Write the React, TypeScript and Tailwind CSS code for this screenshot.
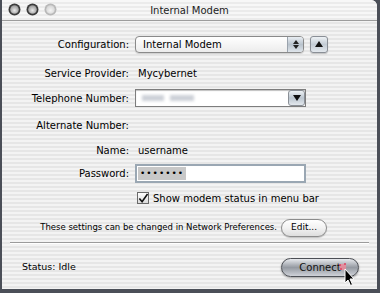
import React from "react";

const stripe =
  "bg-[repeating-linear-gradient(180deg,#f3f3f3_0px,#f3f3f3_2px,#e6e6e6_2px,#e6e6e6_4px)]";

function Light({ dark }: { dark: boolean }) {
  return (
    <svg width="13" height="13" viewBox="0 0 13 13">
      <defs>
        <radialGradient id={dark ? "ld" : "ll"} cx="50%" cy="60%" r="55%">
          <stop offset="0%" stopColor={dark ? "#e8e8e8" : "#f4f4f4"} />
          <stop offset="100%" stopColor={dark ? "#9a9a9a" : "#d6d6d6"} />
        </radialGradient>
      </defs>
      <circle cx="6.5" cy="6.5" r="6" fill={dark ? "#3a3a3a" : "#b8b8b8"} />
      <circle cx="6.5" cy="6.5" r="4.3" fill={`url(#${dark ? "ld" : "ll"})`} />
    </svg>
  );
}

function Label({ children }: { children: React.ReactNode }) {
  return (
    <div className="w-[128px] shrink-0 text-right pr-[1px] text-[10px] text-black">
      {children}
    </div>
  );
}

export default function App() {
  return (
    <div
      className="w-[380px] h-[293px] bg-[#4b4f58] overflow-hidden relative"
      style={{ fontFamily: '"DejaVu Sans", "Liberation Sans", sans-serif' }}
    >
      <div className={`ml-[2px] w-[375px] h-[289px] rounded-tr-[6px] ${stripe} flex flex-col`}>
        {/* Title bar */}
        <div className="h-[21px] shrink-0 relative flex items-center border-b border-[#9c9c9c] bg-[repeating-linear-gradient(180deg,#f7f7f7_0px,#f7f7f7_2px,#ebebeb_2px,#ebebeb_4px)] rounded-tr-[6px]">
          <div className="absolute left-[6px] top-[3px] flex gap-[5px]">
            <Light dark />
            <Light dark />
            <Light dark={false} />
          </div>
          <div className="w-full text-center text-[10px] text-[#222] leading-none pt-[1px]">
            Internal Modem
          </div>
        </div>

        {/* Row 1 */}
        <div className="mt-[14px] h-[18px] flex items-center">
          <Label>Configuration:</Label>
          <div className="ml-[5px] w-[169px] h-[17px] rounded-[4px] border border-[#8a8a8a] bg-gradient-to-b from-white to-[#ececec] flex items-center shadow-[0_1px_1px_rgba(0,0,0,0.15)]">
            <span className="pl-[7px] text-[10px] flex-1">Internal Modem</span>
            <div className="w-[16px] h-full border-l border-[#9aa3ad] rounded-r-[3px] bg-gradient-to-b from-[#e9eef3] via-[#b9c3cd] to-[#dfe5eb] flex flex-col items-center justify-center gap-[1px]">
              <svg width="6" height="4" viewBox="0 0 6 4"><path d="M0 4 L3 0 L6 4 Z" fill="#222" /></svg>
              <svg width="6" height="4" viewBox="0 0 6 4"><path d="M0 0 L3 4 L6 0 Z" fill="#222" /></svg>
            </div>
          </div>
          <div className="ml-[6px] w-[18px] h-[17px] rounded-[3px] border border-[#8a8f96] bg-gradient-to-b from-[#eef2f5] via-[#c3ccd5] to-[#e3e8ed] flex items-center justify-center shadow-[0_1px_1px_rgba(0,0,0,0.2)]">
            <svg width="8" height="6" viewBox="0 0 8 6"><path d="M0 6 L4 0 L8 6 Z" fill="#111" /></svg>
          </div>
        </div>

        {/* Row 2 */}
        <div className="mt-[11px] h-[18px] flex items-center">
          <Label>Service Provider:</Label>
          <span className="ml-[8px] text-[10px]">Mycybernet</span>
        </div>

        {/* Row 3 */}
        <div className="mt-[7px] h-[18px] flex items-center">
          <Label>Telephone Number:</Label>
          <div className="ml-[5px] w-[171px] h-[18px] border border-[#7d7d7d] bg-white flex items-center shadow-[inset_0_1px_1px_rgba(0,0,0,0.25)]">
            <span className="pl-[6px] flex-1 flex gap-[6px] items-center">
              <span className="w-[22px] h-[6px] bg-[#cdd1d8] blur-[1.5px]" />
              <span className="w-[24px] h-[6px] bg-[#cdd1d8] blur-[1.5px]" />
            </span>
            <div className="w-[17px] h-[16px] rounded-[3px] border border-[#8a8f96] bg-gradient-to-b from-[#eef2f5] via-[#bcc6d0] to-[#e3e8ed] flex items-center justify-center">
              <svg width="8" height="6" viewBox="0 0 8 6"><path d="M0 0 L4 6 L8 0 Z" fill="#111" /></svg>
            </div>
          </div>
        </div>

        {/* Row 4 */}
        <div className="mt-[9px] h-[18px] flex items-center">
          <Label>Alternate Number:</Label>
        </div>

        {/* Row 5 */}
        <div className="mt-[7px] h-[18px] flex items-center">
          <Label>Name:</Label>
          <span className="ml-[8px] text-[10px]">username</span>
        </div>

        {/* Row 6 */}
        <div className="mt-[5px] h-[19px] flex items-center">
          <Label>Password:</Label>
          <div className="ml-[5px] w-[171px] h-[19px] border-[2px] border-[#9aa7b3] bg-white flex items-center">
            <span className="ml-[1px] h-[13px] px-[2px] bg-[#c8c8c8] flex items-center text-[9px] tracking-[1px] leading-none">
              •••••••
            </span>
          </div>
        </div>

        {/* Row 7 */}
        <div className="mt-[6px] h-[18px] flex items-center">
          <div className="ml-[135px] w-[12px] h-[12px] border border-[#6a6a6a] bg-gradient-to-b from-white to-[#dcdcdc] flex items-center justify-center">
            <svg width="11" height="11" viewBox="0 0 11 11">
              <path d="M1.5 5.5 L4.5 9 L10.5 0.5" stroke="#111" strokeWidth="1.8" fill="none" />
            </svg>
          </div>
          <span className="ml-[4px] text-[10px]">Show modem status in menu bar</span>
        </div>

        {/* Row 8 */}
        <div className="mt-[11px] h-[19px] flex items-center justify-end pr-[50px]">
          <span className="text-[8.5px] mr-[4px]">These settings can be changed in Network Preferences.</span>
          <div className="w-[46px] h-[18px] rounded-full border border-[#8c8c8c] bg-gradient-to-b from-white via-[#f2f2f2] to-[#dedede] flex items-center justify-center text-[9px] shadow-[0_1px_1px_rgba(0,0,0,0.2)]">
            Edit...
          </div>
        </div>

        {/* Separator */}
        <div className="mt-[5px] mx-[8px] h-[2px] border-t border-[#9b9b9b] border-b border-b-white" />

        {/* Bottom row */}
        <div className="mt-[14px] h-[19px] flex items-center justify-between pl-[20px] pr-[18px]">
          <span className="text-[9.5px]">Status: Idle</span>
          <div className="w-[78px] h-[19px] rounded-full border border-[#4c4f55] bg-gradient-to-b from-[#e8eaee] via-[#959aa2] to-[#cfd2d8] flex items-center justify-center text-[10px] text-[#111] shadow-[0_1px_2px_rgba(0,0,0,0.35)]">
            Connect
          </div>
        </div>
      </div>

      {/* cursor */}
      <svg className="absolute left-[337px] top-[261px]" width="20" height="26" viewBox="0 0 20 26">
        <circle cx="6" cy="6" r="3.2" fill="#f08a9a" opacity="0.8" />
        <circle cx="3" cy="4" r="1" fill="#e04060" />
        <circle cx="8" cy="3" r="1" fill="#e04060" />
        <circle cx="4" cy="8" r="1" fill="#e04060" />
        <path d="M8 8 L8 22 L11 19 L13.5 24.5 L15.5 23.5 L13 18 L17 18 Z" fill="#000" stroke="#fff" strokeWidth="1" />
      </svg>
    </div>
  );
}
